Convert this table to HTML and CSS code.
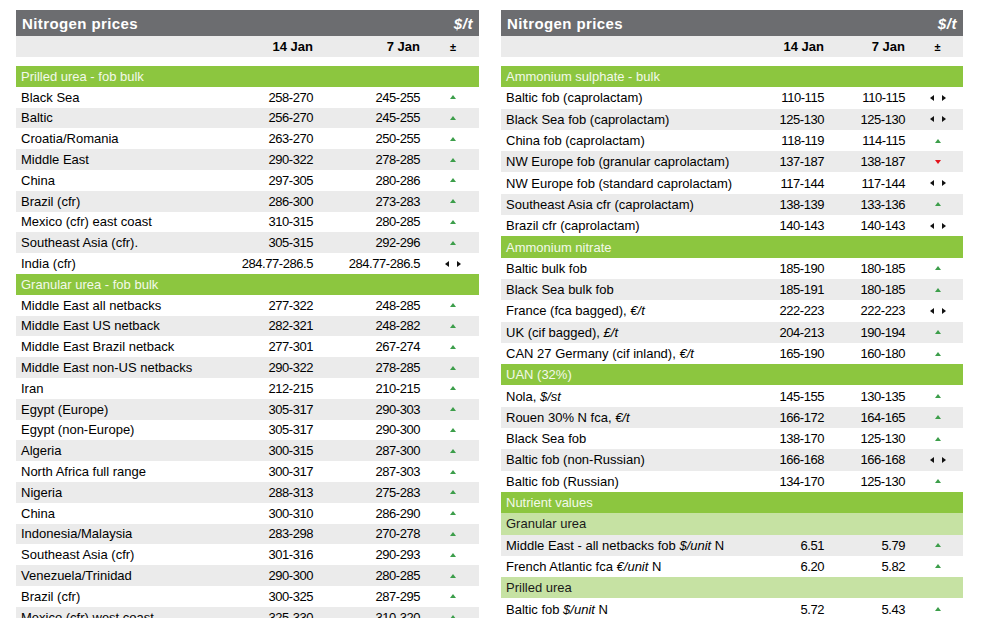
FILE: index.html
```html
<!DOCTYPE html>
<html>
<head>
<meta charset="utf-8">
<link rel="stylesheet" href="styles.css">
</head>
<body>
<div class="page">
  <section class="panel panel-left">
    <div class="title"><span>Nitrogen prices</span><span class="unit">$/t</span></div>
    <div class="row colhead"><span></span><span class="n">14 Jan</span><span class="n">7 Jan</span><span class="chg pm">±</span></div>
    <div class="rows">
      <div class="row sec"><span class="lbl">Prilled urea - fob bulk</span></div>
      <div class="row"><span class="lbl">Black Sea</span><span class="n">258-270</span><span class="n">245-255</span><span class="chg"><i class="up"></i></span></div>
      <div class="row alt"><span class="lbl">Baltic</span><span class="n">256-270</span><span class="n">245-255</span><span class="chg"><i class="up"></i></span></div>
      <div class="row"><span class="lbl">Croatia/Romania</span><span class="n">263-270</span><span class="n">250-255</span><span class="chg"><i class="up"></i></span></div>
      <div class="row alt"><span class="lbl">Middle East</span><span class="n">290-322</span><span class="n">278-285</span><span class="chg"><i class="up"></i></span></div>
      <div class="row"><span class="lbl">China</span><span class="n">297-305</span><span class="n">280-286</span><span class="chg"><i class="up"></i></span></div>
      <div class="row alt"><span class="lbl">Brazil (cfr)</span><span class="n">286-300</span><span class="n">273-283</span><span class="chg"><i class="up"></i></span></div>
      <div class="row"><span class="lbl">Mexico (cfr) east coast</span><span class="n">310-315</span><span class="n">280-285</span><span class="chg"><i class="up"></i></span></div>
      <div class="row alt"><span class="lbl">Southeast Asia (cfr).</span><span class="n">305-315</span><span class="n">292-296</span><span class="chg"><i class="up"></i></span></div>
      <div class="row"><span class="lbl">India (cfr)</span><span class="n">284.77-286.5</span><span class="n">284.77-286.5</span><span class="chg"><i class="lr"><b class="l"></b><b class="r"></b></i></span></div>
      <div class="row sec"><span class="lbl">Granular urea - fob bulk</span></div>
      <div class="row"><span class="lbl">Middle East all netbacks</span><span class="n">277-322</span><span class="n">248-285</span><span class="chg"><i class="up"></i></span></div>
      <div class="row alt"><span class="lbl">Middle East US netback</span><span class="n">282-321</span><span class="n">248-282</span><span class="chg"><i class="up"></i></span></div>
      <div class="row"><span class="lbl">Middle East Brazil netback</span><span class="n">277-301</span><span class="n">267-274</span><span class="chg"><i class="up"></i></span></div>
      <div class="row alt"><span class="lbl">Middle East non-US netbacks</span><span class="n">290-322</span><span class="n">278-285</span><span class="chg"><i class="up"></i></span></div>
      <div class="row"><span class="lbl">Iran</span><span class="n">212-215</span><span class="n">210-215</span><span class="chg"><i class="up"></i></span></div>
      <div class="row alt"><span class="lbl">Egypt (Europe)</span><span class="n">305-317</span><span class="n">290-303</span><span class="chg"><i class="up"></i></span></div>
      <div class="row"><span class="lbl">Egypt (non-Europe)</span><span class="n">305-317</span><span class="n">290-300</span><span class="chg"><i class="up"></i></span></div>
      <div class="row alt"><span class="lbl">Algeria</span><span class="n">300-315</span><span class="n">287-300</span><span class="chg"><i class="up"></i></span></div>
      <div class="row"><span class="lbl">North Africa full range</span><span class="n">300-317</span><span class="n">287-303</span><span class="chg"><i class="up"></i></span></div>
      <div class="row alt"><span class="lbl">Nigeria</span><span class="n">288-313</span><span class="n">275-283</span><span class="chg"><i class="up"></i></span></div>
      <div class="row"><span class="lbl">China</span><span class="n">300-310</span><span class="n">286-290</span><span class="chg"><i class="up"></i></span></div>
      <div class="row alt"><span class="lbl">Indonesia/Malaysia</span><span class="n">283-298</span><span class="n">270-278</span><span class="chg"><i class="up"></i></span></div>
      <div class="row"><span class="lbl">Southeast Asia (cfr)</span><span class="n">301-316</span><span class="n">290-293</span><span class="chg"><i class="up"></i></span></div>
      <div class="row alt"><span class="lbl">Venezuela/Trinidad</span><span class="n">290-300</span><span class="n">280-285</span><span class="chg"><i class="up"></i></span></div>
      <div class="row"><span class="lbl">Brazil (cfr)</span><span class="n">300-325</span><span class="n">287-295</span><span class="chg"><i class="up"></i></span></div>
      <div class="row alt"><span class="lbl">Mexico (cfr) west coast</span><span class="n">325-330</span><span class="n">310-320</span><span class="chg"><i class="up"></i></span></div>
    </div>
  </section>

  <section class="panel panel-right">
    <div class="title"><span>Nitrogen prices</span><span class="unit">$/t</span></div>
    <div class="row colhead"><span></span><span class="n">14 Jan</span><span class="n">7 Jan</span><span class="chg pm">±</span></div>
    <div class="rows">
      <div class="row sec"><span class="lbl">Ammonium sulphate - bulk</span></div>
      <div class="row"><span class="lbl">Baltic fob (caprolactam)</span><span class="n">110-115</span><span class="n">110-115</span><span class="chg"><i class="lr"><b class="l"></b><b class="r"></b></i></span></div>
      <div class="row alt"><span class="lbl">Black Sea fob (caprolactam)</span><span class="n">125-130</span><span class="n">125-130</span><span class="chg"><i class="lr"><b class="l"></b><b class="r"></b></i></span></div>
      <div class="row"><span class="lbl">China fob (caprolactam)</span><span class="n">118-119</span><span class="n">114-115</span><span class="chg"><i class="up"></i></span></div>
      <div class="row alt"><span class="lbl">NW Europe fob (granular caprolactam)</span><span class="n">137-187</span><span class="n">138-187</span><span class="chg"><i class="down"></i></span></div>
      <div class="row"><span class="lbl">NW Europe fob (standard caprolactam)</span><span class="n">117-144</span><span class="n">117-144</span><span class="chg"><i class="lr"><b class="l"></b><b class="r"></b></i></span></div>
      <div class="row alt"><span class="lbl">Southeast Asia cfr (caprolactam)</span><span class="n">138-139</span><span class="n">133-136</span><span class="chg"><i class="up"></i></span></div>
      <div class="row"><span class="lbl">Brazil cfr (caprolactam)</span><span class="n">140-143</span><span class="n">140-143</span><span class="chg"><i class="lr"><b class="l"></b><b class="r"></b></i></span></div>
      <div class="row sec"><span class="lbl">Ammonium nitrate</span></div>
      <div class="row"><span class="lbl">Baltic bulk fob</span><span class="n">185-190</span><span class="n">180-185</span><span class="chg"><i class="up"></i></span></div>
      <div class="row alt"><span class="lbl">Black Sea bulk fob</span><span class="n">185-191</span><span class="n">180-185</span><span class="chg"><i class="up"></i></span></div>
      <div class="row"><span class="lbl">France (fca bagged), <em>€/t</em></span><span class="n">222-223</span><span class="n">222-223</span><span class="chg"><i class="lr"><b class="l"></b><b class="r"></b></i></span></div>
      <div class="row alt"><span class="lbl">UK (cif bagged), <em>£/t</em></span><span class="n">204-213</span><span class="n">190-194</span><span class="chg"><i class="up"></i></span></div>
      <div class="row"><span class="lbl">CAN 27 Germany (cif inland), <em>€/t</em></span><span class="n">165-190</span><span class="n">160-180</span><span class="chg"><i class="up"></i></span></div>
      <div class="row sec"><span class="lbl">UAN (32%)</span></div>
      <div class="row"><span class="lbl">Nola, <em>$/st</em></span><span class="n">145-155</span><span class="n">130-135</span><span class="chg"><i class="up"></i></span></div>
      <div class="row alt"><span class="lbl">Rouen 30% N fca, <em>€/t</em></span><span class="n">166-172</span><span class="n">164-165</span><span class="chg"><i class="up"></i></span></div>
      <div class="row"><span class="lbl">Black Sea fob</span><span class="n">138-170</span><span class="n">125-130</span><span class="chg"><i class="up"></i></span></div>
      <div class="row alt"><span class="lbl">Baltic fob (non-Russian)</span><span class="n">166-168</span><span class="n">166-168</span><span class="chg"><i class="lr"><b class="l"></b><b class="r"></b></i></span></div>
      <div class="row"><span class="lbl">Baltic fob (Russian)</span><span class="n">134-170</span><span class="n">125-130</span><span class="chg"><i class="up"></i></span></div>
      <div class="row sec"><span class="lbl">Nutrient values</span></div>
      <div class="row sub"><span class="lbl">Granular urea</span></div>
      <div class="row alt"><span class="lbl">Middle East - all netbacks fob <em>$/unit</em> N</span><span class="n">6.51</span><span class="n">5.79</span><span class="chg"><i class="up"></i></span></div>
      <div class="row"><span class="lbl">French Atlantic fca <em>€/unit</em> N</span><span class="n">6.20</span><span class="n">5.82</span><span class="chg"><i class="up"></i></span></div>
      <div class="row sub"><span class="lbl">Prilled urea</span></div>
      <div class="row"><span class="lbl">Baltic fob <em>$/unit</em> N</span><span class="n">5.72</span><span class="n">5.43</span><span class="chg"><i class="up"></i></span></div>
    </div>
  </section>
</div>
</body>
</html>
```

FILE: styles.css
```css
html, body {
  margin: 0;
  padding: 0;
  background: #ffffff;
  overflow: hidden;
}

body {
  font-family: "Liberation Sans", Arial, sans-serif;
  font-size: 13px;
  color: #000000;
}

.page {
  display: flex;
  align-items: flex-start;
  gap: 22px;
  padding: 10px 0 0 16px;
}

.panel-left { width: 463px; }
.panel-right { width: 462px; }

.title {
  height: 26px;
  background: #6c6d70;
  color: #ffffff;
  display: flex;
  align-items: center;
  justify-content: space-between;
  padding: 0 6px;
  font-weight: bold;
  font-size: 15px;
  letter-spacing: 0.4px;
}

.title .unit {
  font-style: italic;
  letter-spacing: 0.6px;
}

.row {
  display: grid;
  align-items: center;
  height: 20.8px;
  background: #ffffff;
}

.panel-left .row { grid-template-columns: minmax(0, 1fr) 100px 107px 59px; }
.panel-right .row { grid-template-columns: minmax(0, 1fr) 100px 81px 58px; height: 21.3px; }

.row.colhead {
  height: 21px;
  background: #ebebeb;
  font-weight: bold;
}
.panel-right .row.colhead { height: 21px; }

.row.colhead .n { letter-spacing: 0; }

.rows { margin-top: 9px; }

.row.alt { background: #ebebeb; }

.row.sec {
  background: #8cc63f;
  color: #f3f9ea;
}

.row.sub {
  background: #c6e2a3;
  color: #1a1a1a;
}

.lbl {
  padding-left: 5px;
  white-space: nowrap;
  overflow: visible;
}

.row.sec .lbl, .row.sub .lbl { grid-column: 1 / -1; }

em { font-style: italic; }

.n {
  text-align: right;
  letter-spacing: -0.45px;
  white-space: nowrap;
}

.chg {
  display: flex;
  justify-content: center;
  align-items: center;
  padding-left: 7px;
}

.pm {
  font-size: 11px;
  font-weight: bold;
}

.up {
  display: block;
  width: 0;
  height: 0;
  border-left: 3.5px solid transparent;
  border-right: 3.5px solid transparent;
  border-bottom: 4px solid #3c9e4a;
}

.down {
  display: block;
  width: 0;
  height: 0;
  border-left: 3.5px solid transparent;
  border-right: 3.5px solid transparent;
  border-top: 4px solid #e3141c;
}

.lr {
  display: flex;
  gap: 8px;
  align-items: center;
}

.lr .l {
  display: block;
  width: 0;
  height: 0;
  border-top: 3px solid transparent;
  border-bottom: 3px solid transparent;
  border-right: 4px solid #111111;
}

.lr .r {
  display: block;
  width: 0;
  height: 0;
  border-top: 3px solid transparent;
  border-bottom: 3px solid transparent;
  border-left: 4px solid #111111;
}
```
